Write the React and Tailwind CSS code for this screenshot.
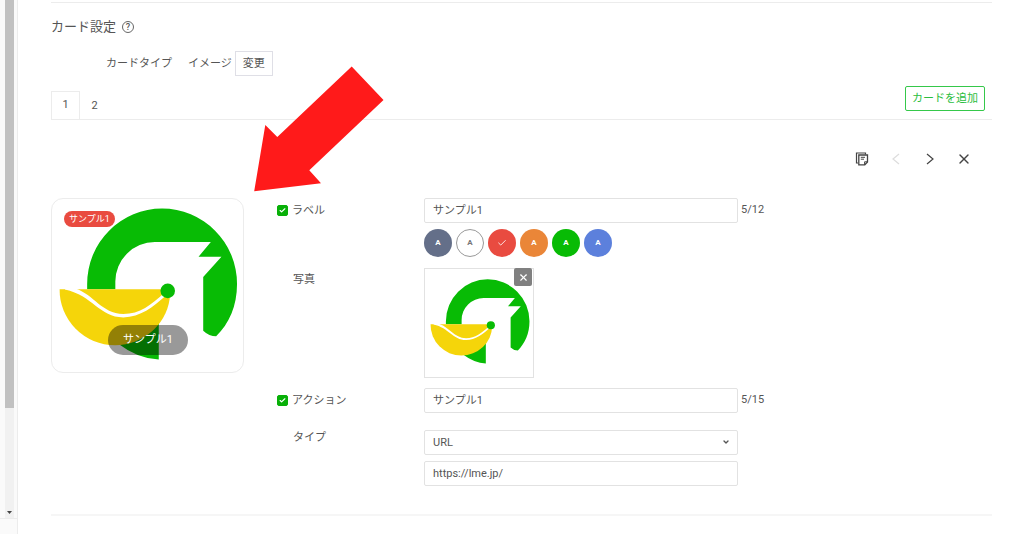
import { useState } from 'react'
import { Check, ChevronDown, X } from 'lucide-react'

const swatches = [
    { id: 'slate', label: 'グレー', className: 'bg-[#646f89] text-white' },
    { id: 'white', label: 'ホワイト', className: 'bg-white text-[#777] border border-[#999]' },
    { id: 'red', label: 'レッド', className: 'bg-[#e94b40] text-white' },
    { id: 'orange', label: 'オレンジ', className: 'bg-[#ea8638] text-white' },
    { id: 'green', label: 'グリーン', className: 'bg-[#08bb05] text-white' },
    { id: 'blue', label: 'ブルー', className: 'bg-[#5c80dc] text-white' },
]

const inputClass = 'block w-full h-[25px] px-2 border border-[#e2e2e2] rounded-xs bg-white text-[11px] text-[#555] outline-none'

function Logo({ viewBox, className }) {
    return (
        <svg viewBox={viewBox} className={className} aria-hidden="true">
            <path
                d="M141 299 V283 A226 227 0 0 1 593 283 C593 350 569 402 530 441 Q509 441 491 424 V262 L546 201 H477 L514 157 H345 A119 119 0 0 0 226 276 V299 Z"
                fill="#08bb05"
            />
            <path d="M357 390 V511 Q293 508 236 464 Z" fill="#08bb05" />
            <path d="M58 299 A167 167 0 0 0 225 468 A167 160 0 0 0 391 312 L384 299 Z" fill="#f5d50a" />
            <path d="M76 295 L106 297 C162 316 184 372 250 374 C300 374 335 345 372 312 L378 319 C340 352 302 384 250 384 C178 384 158 318 74 300 Z" fill="#fff" />
            <circle cx="384" cy="304" r="22" fill="#08bb05" />
        </svg>
    )
}

function CopyIcon() {
    return (
        <svg width="14" height="14" viewBox="0 0 14 14" fill="none" stroke="#444" aria-hidden="true">
            <path d="M3 11 H1.5 V1 H10.5 V2.5" strokeWidth="1.2" />
            <path d="M3.8 3 H12.5 V10 L9.8 12.8 H3.8 Z" strokeWidth="1.3" />
            <path d="M12.5 9.8 H9.6 V12.8" strokeWidth="1" />
            <path d="M5.8 5.3 H10 M5.8 7.2 H9" strokeWidth="1" />
        </svg>
    )
}

function Arrow({ d }) {
    return (
        <svg width="8" height="14" viewBox="0 0 8 14" fill="none" stroke="currentColor" strokeWidth="1.2" aria-hidden="true">
            <path d={d} />
        </svg>
    )
}

function CheckLabel({ id, children }) {
    return (
        <div className="flex items-center gap-1 h-[25px]">
            <span className="relative flex">
                <input
                    id={id}
                    type="checkbox"
                    defaultChecked
                    className="peer appearance-none size-[11px] rounded-xs border border-[#08b008] checked:bg-[#08b008]"
                />
                <Check size={7} strokeWidth={4} className="absolute left-[2px] top-[2px] text-white pointer-events-none" />
            </span>
            <label htmlFor={id}>{children}</label>
        </div>
    )
}

function ScrollRail() {
    return (
        <div className="flex flex-col w-[18px] shrink-0 h-[534px] border-r border-[#ececec] bg-[#fafafa]">
            <div className="flex flex-col flex-1 ml-[5px] mr-[3px] bg-[#f1f1f1]">
                <div className="h-[408px] bg-[#c1c1c1]"></div>
                <div className="flex flex-1 items-end justify-center pb-1">
                    <svg width="5" height="3" viewBox="0 0 5 3" aria-hidden="true">
                        <path d="M0 0 H5 L2.5 3 Z" fill="#444" />
                    </svg>
                </div>
            </div>
            <div className="h-4 border-t border-[#ececec]"></div>
        </div>
    )
}

export default function App() {
    const [tab, setTab] = useState(1)
    const [color, setColor] = useState('red')
    const [label, setLabel] = useState('サンプル1')
    const [action, setAction] = useState('サンプル1')
    const [url, setUrl] = useState('https://lme.jp/')

    return (
        <div className="flex min-h-screen bg-white text-[11px] leading-4 text-[#555] [font-family:Roboto,'Noto_Sans_CJK_JP',sans-serif]">
            <ScrollRail />
            <main className="relative flex-1 min-w-0 pt-[2px] pl-[33px] pr-8">
                <section className="border-t border-b-2 border-t-[#ececec] border-b-[#f6f6f6] pb-7">
                    <h2 className="flex items-center gap-[6px] pt-[14px] h-[34px] text-[13px]">
                        カード設定
                        <span className="flex items-center justify-center size-3 rounded-full border border-[#666] text-[9px] font-medium">?</span>
                    </h2>

                    <div className="flex items-center mt-[14px] pl-[55px]">
                        <span>カードタイプ</span>
                        <span className="ml-4">イメージ</span>
                        <button className="ml-[3px] h-[25px] px-[7px] border border-[#dfdfe6]">変更</button>
                    </div>

                    <div className="flex items-end justify-between mt-[10px] border-b border-[#ececec]">
                        <div className="flex pt-[5px]">
                            {[1, 2].map((n) => (
                                <button
                                    key={n}
                                    onClick={() => setTab(n)}
                                    className={`w-[29px] h-7 border border-b-0 ${tab === n ? 'border-[#ececec] bg-white -mb-px pb-px' : 'border-transparent'}`}
                                >
                                    {n}
                                </button>
                            ))}
                        </div>
                        <button className="h-[25px] mb-2 mr-[7px] px-[6px] border border-[#35c84a] rounded-xs text-[#2bbd40]">カードを追加</button>
                    </div>

                    <div className="flex items-center justify-end gap-[18px] h-[18px] mt-[30px] pr-5">
                        <button aria-label="コピー" className="flex justify-center w-4"><CopyIcon /></button>
                        <button aria-label="前へ" disabled className="flex justify-center w-4 text-[#ddd]"><Arrow d="M7 2 L1 7 L7 12" /></button>
                        <button aria-label="次へ" className="flex justify-center w-4 text-[#444]"><Arrow d="M1 2 L7 7 L1 12" /></button>
                        <button aria-label="削除" className="flex justify-center w-4 text-[#444]"><X size={16} strokeWidth={2} /></button>
                    </div>

                    <div className="flex items-start gap-[33px] mt-[30px]">
                        <div className="relative w-[193px] shrink-0 border border-[#ececec] rounded-xl overflow-hidden">
                            <Logo viewBox="35 27 576 522" className="block w-full" />
                            <span className="absolute left-3 top-3 px-[5px] rounded-full bg-[#e94b40] text-[9px] leading-4 text-white">サンプル1</span>
                            <span className="absolute left-14 bottom-[17px] px-[15px] rounded-full bg-black/40 leading-[30px] text-white">サンプル1</span>
                        </div>

                        <div className="flex-1 min-w-0">
                            <div className="flex">
                                <div className="w-[147px] shrink-0"><CheckLabel id="label-check">ラベル</CheckLabel></div>
                                <div className="flex-1 max-w-[314px]">
                                    <input aria-label="ラベル" value={label} onChange={(e) => setLabel(e.target.value)} className={`${inputClass} pb-[3px]`} />
                                    <div className="flex gap-1 mt-[6px]">
                                        {swatches.map((s) => (
                                            <button
                                                key={s.id}
                                                aria-label={s.label}
                                                aria-pressed={color === s.id}
                                                onClick={() => setColor(s.id)}
                                                className={`flex items-center justify-center size-7 rounded-full text-[8px] font-bold ${s.className}`}
                                            >
                                                {color === s.id ? <Check size={10} strokeWidth={2} /> : 'A'}
                                            </button>
                                        ))}
                                    </div>
                                </div>
                                <span className="ml-[3px] mt-1">{label.length}/12</span>
                            </div>

                            <div className="flex mt-[11px]">
                                <div className="w-[147px] shrink-0 pl-4 pt-1">写真</div>
                                <div className="relative w-[110px] border border-[#e2e2e2]">
                                    <Logo viewBox="28 0 584 584" className="block w-full" />
                                    <button aria-label="写真を削除" className="absolute right-px -top-px flex items-center justify-center size-[18px] rounded-xs bg-[#808080] text-white">
                                        <X size={11} strokeWidth={2.5} />
                                    </button>
                                </div>
                            </div>

                            <div className="flex mt-[10px]">
                                <div className="w-[147px] shrink-0"><CheckLabel id="action-check">アクション</CheckLabel></div>
                                <div className="flex-1 max-w-[314px]">
                                    <input aria-label="アクション" value={action} onChange={(e) => setAction(e.target.value)} className={`${inputClass} pb-[3px]`} />
                                </div>
                                <span className="ml-[3px] mt-1">{action.length}/15</span>
                            </div>

                            <div className="flex mt-[17px]">
                                <label htmlFor="type" className="w-[147px] shrink-0 pl-4">タイプ</label>
                                <div className="flex flex-col flex-1 gap-[6px] max-w-[314px]">
                                    <div className="relative">
                                        <select id="type" className={`${inputClass} appearance-none`}>
                                            <option>URL</option>
                                        </select>
                                        <ChevronDown size={8} strokeWidth={4} className="absolute right-2 top-2 pointer-events-none" />
                                    </div>
                                    <input aria-label="URL" value={url} onChange={(e) => setUrl(e.target.value)} className={inputClass} />
                                </div>
                            </div>
                        </div>
                    </div>
                </section>

                <svg width="130" height="126" viewBox="254 66 130 126" className="absolute left-[236px] top-[66px] pointer-events-none" aria-hidden="true">
                    <path d="M351.7 66.5 L383.5 100 L309.3 170.3 L321 183.3 L254.2 191.2 L265.3 125 L277.3 137 Z" fill="#ff1a1a" />
                </svg>
            </main>
        </div>
    )
}
